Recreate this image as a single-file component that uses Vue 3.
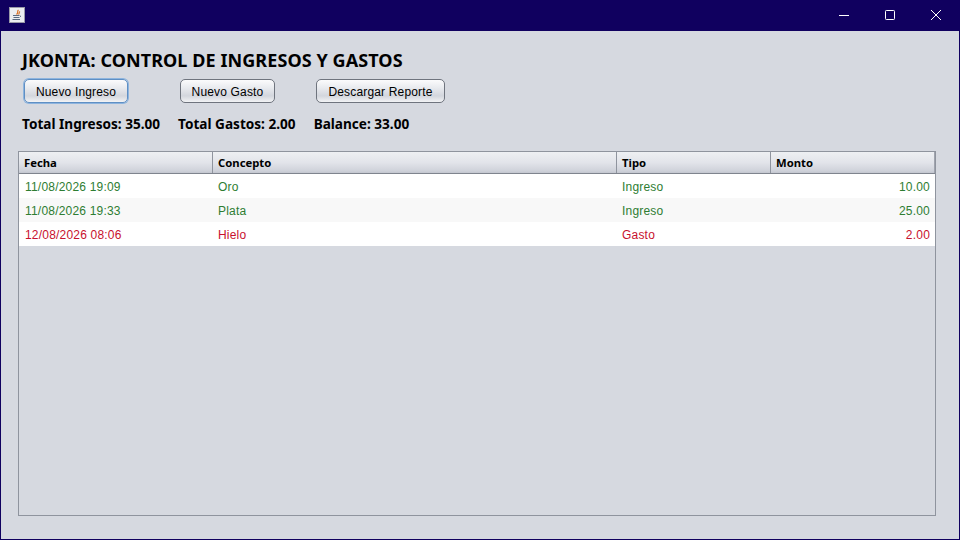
<script setup>
const columns = [
  { label: 'Fecha', cls: 'c1' },
  { label: 'Concepto', cls: 'c2' },
  { label: 'Tipo', cls: 'c3' },
  { label: 'Monto', cls: 'c4' }
]
const rows = [
  { fecha: '11/08/2026 19:09', concepto: 'Oro', tipo: 'Ingreso', monto: '10.00', kind: 'in' },
  { fecha: '11/08/2026 19:33', concepto: 'Plata', tipo: 'Ingreso', monto: '25.00', kind: 'in' },
  { fecha: '12/08/2026 08:06', concepto: 'Hielo', tipo: 'Gasto', monto: '2.00', kind: 'out' }
]
</script>

<template>
  <div class="window">
    <header class="titlebar">
      <div class="appicon">
        <svg width="16" height="16" viewBox="0 0 16 16">
          <rect x="0.5" y="0.5" width="15" height="15" fill="#eceef0" stroke="#9a9aa8" />
          <path d="M9.5 3 C7.5 4.5 10 5.5 7.5 7.5 M11 4.5 C9.5 5.5 11 6 9.5 7.5" fill="none" stroke="#d8742a" stroke-width="1.2" />
          <path d="M4 8.5 H10 M4.5 10.5 H10 M3.5 12.5 H11 M10.5 8.5 Q13 9 10.5 10.5" fill="none" stroke="#5a6a80" stroke-width="1" />
        </svg>
      </div>
      <div class="controls">
        <div class="ctl">
          <svg width="12" height="12" viewBox="0 0 12 12"><path d="M1 6.5 H11" stroke="#fff" fill="none" /></svg>
        </div>
        <div class="ctl">
          <svg width="12" height="12" viewBox="0 0 12 12"><rect x="1.5" y="1.5" width="9" height="9" rx="0.8" stroke="#fff" fill="none" /></svg>
        </div>
        <div class="ctl">
          <svg width="12" height="12" viewBox="0 0 12 12"><path d="M1 1 L11 11 M11 1 L1 11" stroke="#fff" fill="none" /></svg>
        </div>
      </div>
    </header>

    <main class="content">
      <h1 class="title">JKONTA: CONTROL DE INGRESOS Y GASTOS</h1>

      <div class="actions">
        <button class="btn btn-ingreso focused">Nuevo Ingreso</button>
        <button class="btn btn-gasto">Nuevo Gasto</button>
        <button class="btn btn-reporte">Descargar Reporte</button>
      </div>

      <div class="totals">
        <span>Total Ingresos: 35.00</span>
        <span>Total Gastos: 2.00</span>
        <span>Balance: 33.00</span>
      </div>

      <section class="table">
        <div class="thead">
          <div v-for="col in columns" :key="col.label" class="th" :class="col.cls">{{ col.label }}</div>
        </div>
        <div v-for="(row, i) in rows" :key="i" class="tr" :class="[row.kind, { alt: i % 2 === 1 }]">
          <div class="td c1">{{ row.fecha }}</div>
          <div class="td c2">{{ row.concepto }}</div>
          <div class="td c3">{{ row.tipo }}</div>
          <div class="td c4 num">{{ row.monto }}</div>
        </div>
      </section>
    </main>
  </div>
</template>

<style>
html, body { margin: 0; padding: 0; }
</style>

<style scoped>
.window {
  width: 960px;
  height: 540px;
  box-sizing: border-box;
  display: flex;
  flex-direction: column;
  background: #d6d9e0;
  border: 1px solid #10005f;
  border-top: 0;
  overflow: hidden;
}
.titlebar {
  height: 31px;
  flex: none;
  margin: 0 -1px;
  background: #10005f;
  display: flex;
  align-items: center;
  justify-content: space-between;
}
.appicon {
  display: flex;
  margin: 0 0 1px 9px;
}
.controls {
  display: flex;
  margin: 0 1px 2px 0;
}
.ctl {
  width: 46px;
  height: 29px;
  display: flex;
  align-items: center;
  justify-content: center;
}
.content {
  flex: 1;
  min-height: 0;
  display: flex;
  flex-direction: column;
  padding: 0 23px 23px 17px;
}
.title {
  margin: 16px 0 0 4px;
  height: 26px;
  font: 700 18px/26px "Noto Sans", "Open Sans", sans-serif;
  letter-spacing: 0.08px;
  color: #000;
  white-space: nowrap;
}
.actions {
  display: flex;
  margin: 6px 0 0 6px;
}
.btn {
  height: 24px;
  box-sizing: border-box;
  padding: 1px 0 0;
  border: 1px solid #6f747e;
  border-radius: 5px;
  background: linear-gradient(#fbfbfc 0%, #e9ebef 35%, #d3d6dd 72%, #f2f3f5 100%);
  font: 12px "Liberation Sans", Arial, sans-serif;
  letter-spacing: 0.16px;
  color: #000;
  text-align: center;
}
.focused {
  border: 1px solid #5f8fc4;
  box-shadow: 0 0 0 1px #8db4de;
}
.btn-ingreso { width: 104px; }
.btn-gasto { width: 95px; margin-left: 52px; }
.btn-reporte { width: 129px; margin-left: 41px; }
.totals {
  display: flex;
  gap: 18px;
  margin: 12px 0 0 4px;
  height: 18px;
  font: 700 13.6px/18px "Noto Sans", "Open Sans", sans-serif;
  color: #000;
  white-space: nowrap;
}
.table {
  flex: 1;
  min-height: 0;
  margin-top: 18px;
  border: 1px solid #8f949e;
  box-sizing: border-box;
}
.thead {
  display: flex;
  height: 22px;
  box-sizing: border-box;
  border-bottom: 1px solid #7f848e;
  background: linear-gradient(#eef0f3 0%, #e2e4ea 50%, #cfd2da 90%, #c3c6cf 100%);
}
.th {
  box-sizing: border-box;
  padding-left: 5px;
  font: 700 11.3px/21px "Noto Sans", "Open Sans", sans-serif;
  color: #000;
  border-right: 1px solid #8f949e;
}
.th.c4 { border-right: 1px solid #a0a4ae; }
.c1 { width: 194px; flex: none; }
.c2 { width: 404px; flex: none; }
.c3 { width: 154px; flex: none; }
.c4 { flex: 1; min-width: 0; }
.tr {
  display: flex;
  height: 24px;
  background: #fff;
}
.tr.alt { background: #f8f8f8; }
.tr.in { color: #2e7d32; }
.tr.out { color: #c8102e; }
.td {
  box-sizing: border-box;
  padding: 1px 0 0 5px;
  font: 12px/24px "Liberation Sans", Arial, sans-serif;
  letter-spacing: 0.2px;
  white-space: nowrap;
}
.td.c1 { padding-left: 6px; }
.td.num {
  text-align: right;
  padding: 1px 5px 0 0;
}
</style>
